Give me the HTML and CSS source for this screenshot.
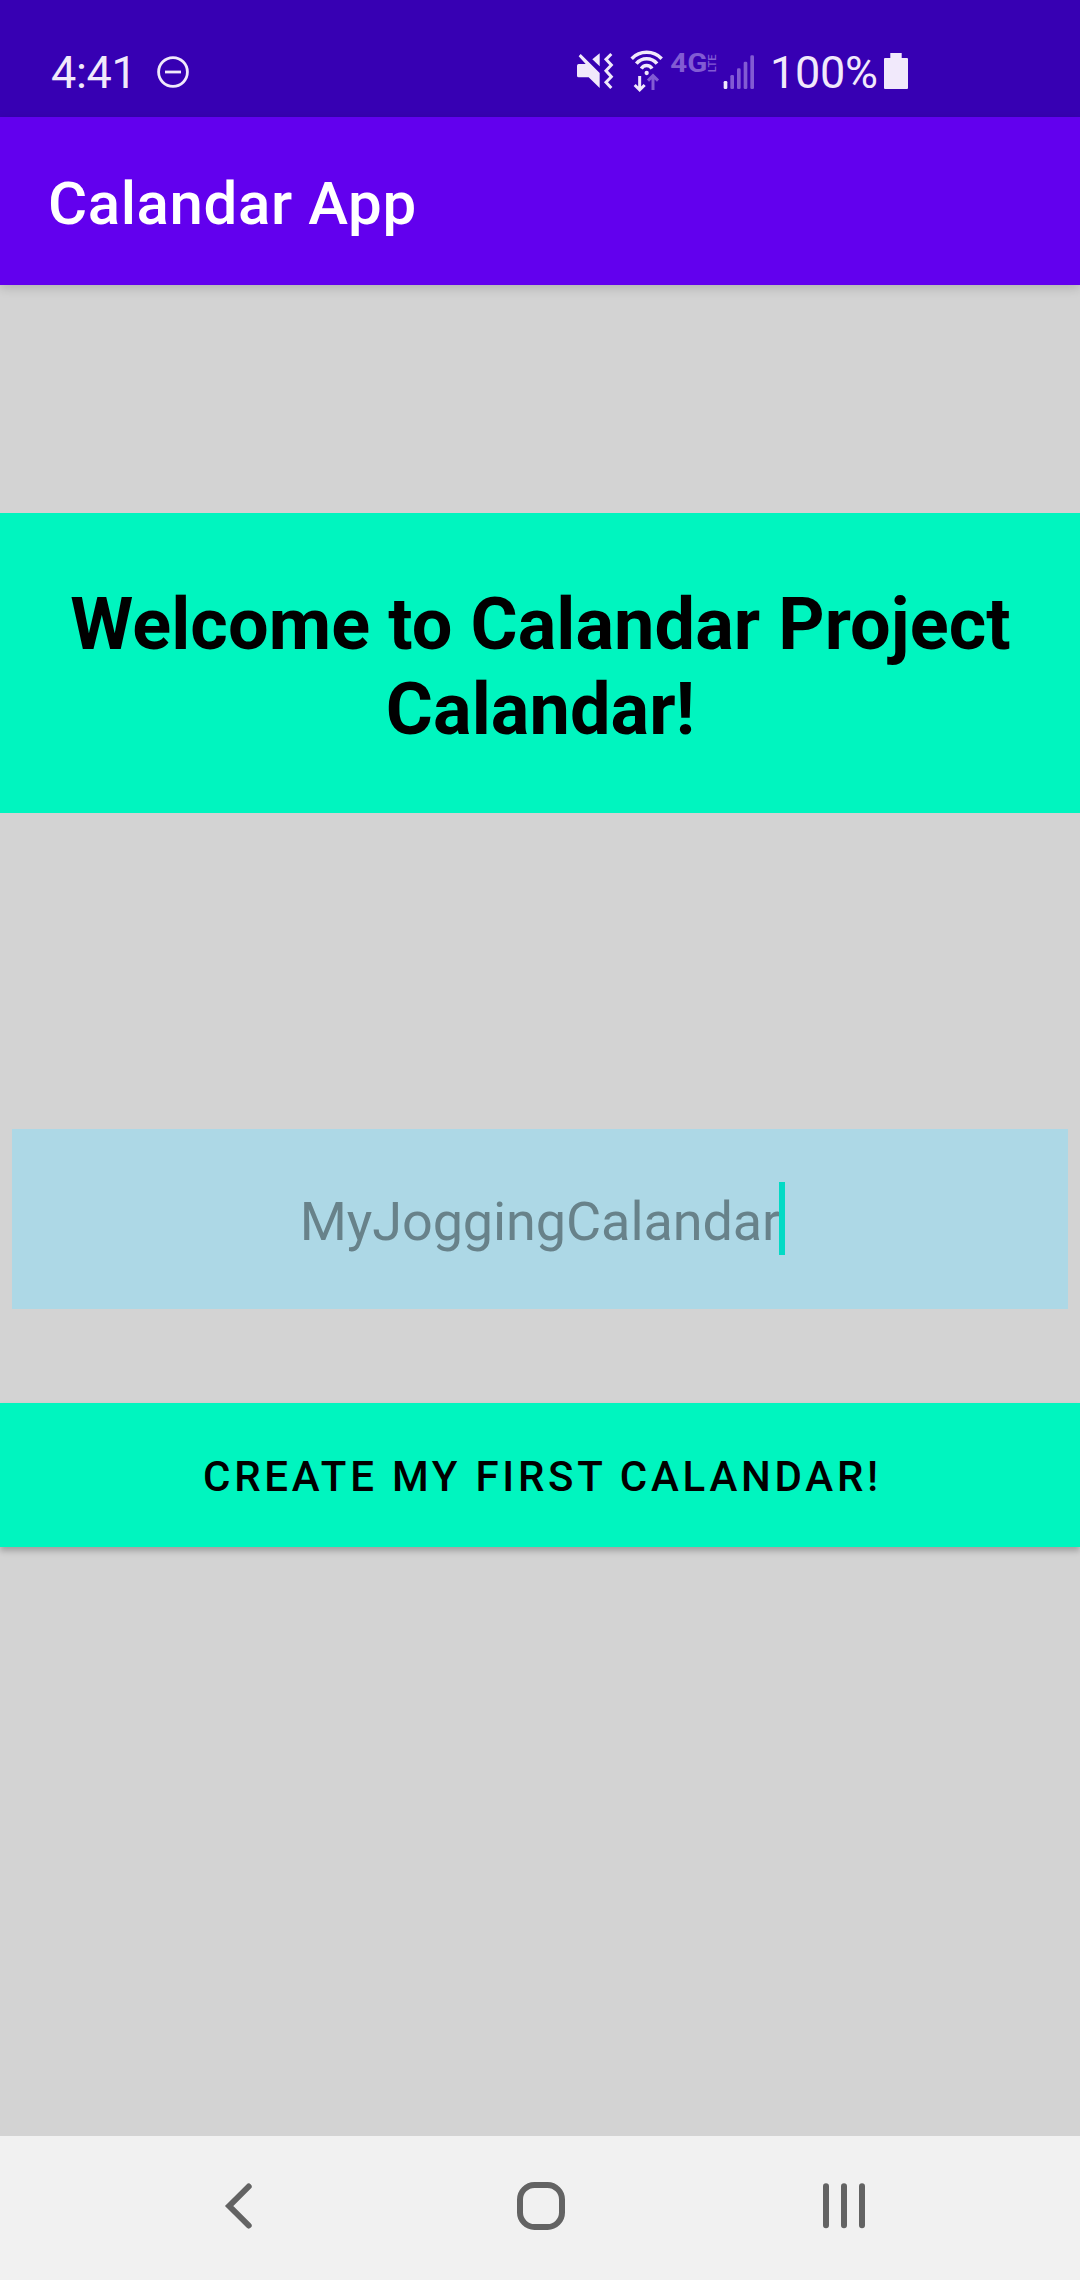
FILE: index.html
```html
<!DOCTYPE html>
<html lang="en">
<head>
<meta charset="utf-8">
<title>Calandar App</title>
<link rel="stylesheet" href="styles.css">
</head>
<body>
<div class="screen">
  <div class="status-bar">
    <span class="clock">4:41</span>
    <svg class="dnd" width="34" height="34" viewBox="0 0 34 34"><circle cx="17" cy="17" r="14.4"/><path d="M9 17H25"/></svg>
    <svg class="indicators" width="190" height="60" viewBox="0 0 570 180">
      <g class="solid">
        <path d="M21 77q0-5 5-5h21L26 49l6-7L89 99V144L56 112H26q-5 0-5-5z"/>
        <path d="M89 40V79L67 58z"/>
        <path class="line" d="M124 42L108 58L124 75L108 92L124 110L108 127L124 144"/>
        <path class="line arcs" d="M185 56A63 63 0 0 1 275 56M199 71A40 40 0 0 1 261 71M214 86A18.5 18.5 0 0 1 246 86"/>
        <circle cx="230" cy="99" r="6.5"/>
        <path class="line" d="M209 108V149M194 135L209 150L224 135"/>
        <rect x="461" y="123" width="11" height="24" rx="4"/>
      </g>
      <g class="dim">
        <path class="line" d="M249 150V109M234 122L249 107L264 122"/>
        <text class="net" x="301" y="97" textLength="111" lengthAdjust="spacingAndGlyphs">4G</text>
        <text class="lte" transform="translate(437 97) rotate(-90)" textLength="54" lengthAdjust="spacingAndGlyphs">LTE</text>
        <rect x="481" y="105" width="11" height="42" rx="4"/>
        <rect x="501" y="85" width="11" height="62" rx="4"/>
        <rect x="521" y="65" width="11" height="82" rx="4"/>
        <rect x="541" y="46" width="11" height="101" rx="4"/>
      </g>
    </svg>
    <span class="percent">100%</span>
    <svg class="battery" width="24" height="36" viewBox="0 0 24 36"><path d="M6.3 0H17.7V5H23q1 0 1 1V35q0 1-1 1H1q-1 0-1-1V6q0-1 1-1H6.3z"/></svg>
  </div>
  <header class="app-bar"><h1>Calandar App</h1></header>
  <main class="content">
    <h2 class="welcome">Welcome to Calandar Project Calandar!</h2>
    <div class="name-field"><span class="hint">MyJoggingCalandar<i class="caret"></i></span></div>
    <button class="create">CREATE MY FIRST CALANDAR!</button>
  </main>
  <nav class="nav-bar">
    <svg width="60" height="60" viewBox="0 0 60 60"><path class="stroke" d="M38.7 10.5L19.2 30L38.7 49.5"/></svg>
    <svg width="60" height="60" viewBox="0 0 60 60"><rect class="stroke" x="8" y="9" width="42" height="42" rx="14.5"/></svg>
    <svg width="60" height="60" viewBox="0 0 60 60"><path class="stroke" d="M12 10.3V49.2M30 10.3V49.2M48 10.3V49.2"/></svg>
  </nav>
</div>
</body>
</html>
```

FILE: styles.css
```css
body {
  margin: 0;
  font-family: Roboto, "Liberation Sans", sans-serif;
}

.screen {
  display: flex;
  flex-direction: column;
  width: 1080px;
  height: 2280px;
  overflow: hidden;
  background: #d3d3d3;
}

.status-bar {
  display: flex;
  align-items: flex-start;
  box-sizing: border-box;
  height: 117px;
  padding: 40px 0 0 51px;
  background: #3700b3;
  color: #f1e9fb;
}

.clock,
.percent {
  font-size: 45px;
  line-height: 66px;
}

.clock {
  width: 105px;
  letter-spacing: -0.3px;
}

.dnd {
  margin-top: 15px;
  fill: none;
  stroke: #f1e9fb;
  stroke-width: 2.8;
}

.indicators {
  margin-left: 380px;
}

.solid {
  fill: #f1e9fb;
  stroke: #f1e9fb;
}

.dim {
  fill: #825bd3;
  stroke: #825bd3;
}

.solid,
.dim {
  stroke-width: 0;
}

.line {
  fill: none;
  stroke-width: 9;
}

.arcs {
  stroke-width: 10.5;
}

.net {
  font-size: 76px;
  font-weight: 700;
}

.lte {
  font-size: 33px;
  font-weight: 500;
}

.percent {
  width: 114px;
  margin-left: 10px;
  letter-spacing: -0.3px;
}

.battery {
  margin-top: 13px;
  fill: #f1e9fb;
}

.app-bar {
  display: flex;
  align-items: center;
  box-sizing: border-box;
  height: 168px;
  padding: 4px 0 0 48px;
  background: #6200ee;
  color: #fff;
  box-shadow: 0 3px 10px rgba(0, 0, 0, 0.16);
}

h1 {
  margin: 0;
  font-size: 60px;
  font-weight: 500;
  letter-spacing: 0.6px;
}

.content {
  display: flex;
  flex: 1;
  flex-direction: column;
  padding-top: 227.67px;
}

.welcome {
  box-sizing: border-box;
  height: 300px;
  margin: 0;
  padding: 69.5px 47px 0 48px;
  background: #00f5bf;
  color: #000;
  font-size: 72px;
  font-weight: 700;
  letter-spacing: 0.1px;
  line-height: 85px;
  text-align: center;
}

.name-field {
  display: flex;
  justify-content: center;
  box-sizing: border-box;
  height: 180px;
  margin: 316.33px 12px 0;
  padding-top: 53px;
  background: #add8e6;
  color: #68828a;
  font-size: 54px;
  letter-spacing: -0.1px;
  line-height: 80px;
}

.hint {
  position: relative;
}

.caret {
  position: absolute;
  top: 0;
  left: 100%;
  width: 6px;
  height: 73px;
  margin-left: -1px;
  background: #03dac5;
}

.create {
  height: 144px;
  margin-top: 93.67px;
  padding: 3px 0 0 5px;
  border: 0;
  background: #00f5bf;
  color: #000;
  box-shadow: 0 4px 6px rgba(0, 0, 0, 0.24);
  font: 500 42px Roboto, "Liberation Sans", sans-serif;
  letter-spacing: 3.75px;
}

.nav-bar {
  display: flex;
  gap: 242px;
  box-sizing: border-box;
  height: 144px;
  padding: 40px 0 0 210px;
  background: #f1f1f1;
}

.stroke {
  fill: none;
  stroke: #636363;
  stroke-width: 6;
  stroke-linecap: round;
}
```
